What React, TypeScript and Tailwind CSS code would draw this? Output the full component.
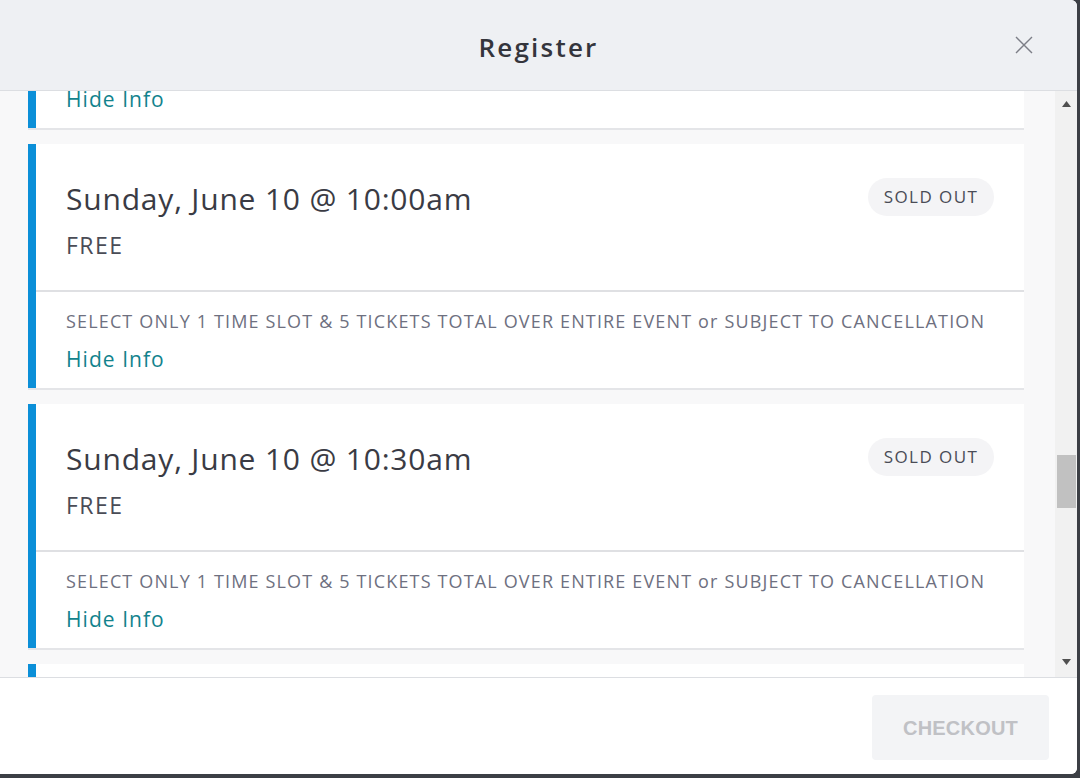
import React from "react";

interface Slot {
  title: string;
  price: string;
}

const slots: Slot[] = [
  { title: "Sunday, June 10 @ 9:30am", price: "FREE" },
  { title: "Sunday, June 10 @ 10:00am", price: "FREE" },
  { title: "Sunday, June 10 @ 10:30am", price: "FREE" },
  { title: "Sunday, June 10 @ 11:00am", price: "FREE" },
];

const NOTE =
  "SELECT ONLY 1 TIME SLOT & 5 TICKETS TOTAL OVER ENTIRE EVENT or SUBJECT TO CANCELLATION";

const SlotCard: React.FC<{ slot: Slot }> = ({ slot }) => (
  <div className="flex bg-white border-b-2 border-[#e4e5e8]">
    <div className="w-2 shrink-0 bg-[#0b8fd8]" />
    <div className="flex-1">
      <div className="h-[148px] flex justify-between pl-[30px] pr-[30px] pt-[35px] border-b-2 border-[#dfe0e3]">
        <div>
          <div className="text-[30px] leading-[40px] tracking-[0.027em] text-[#3a3b44]">{slot.title}</div>
          <div className="mt-[11px] text-[23px] leading-[30px] tracking-[0.065em] text-[#4a4c56]">
            {slot.price}
          </div>
        </div>
        <div className="mt-[-1px] h-[38px] w-[126px] rounded-full bg-[#f4f4f6] flex items-center justify-center text-[17px] tracking-[0.085em] text-[#4a4c56]">
          SOLD OUT
        </div>
      </div>
      <div className="h-[96px] pl-[30px] pt-[17px]">
        <div className="text-[18px] leading-[24px] tracking-[0.064em] text-[#6e7080] whitespace-nowrap">{NOTE}</div>
        <div className="mt-[12px] text-[21px] leading-[28px] tracking-[0.05em] text-[#12838d]">Hide Info</div>
      </div>
    </div>
  </div>
);

export default function App() {
  return (
    <div className="w-[1080px] h-[778px] bg-[#3c3f45] overflow-hidden" style={{ fontFamily: "'Open Sans', 'Liberation Sans', sans-serif" }}>
      <div className="w-[1077px] h-[774px] bg-white rounded-r-[6px] overflow-hidden flex flex-col">
        {/* Header */}
        <div className="h-[91px] shrink-0 pt-[4px] bg-[#eef0f3] border-b border-[#dcdee2] relative flex items-center justify-center">
          <div className="text-[26px] font-semibold tracking-[0.085em] text-[#34353c]">Register</div>
          <button className="absolute right-[44px] top-[36px] text-[#7c7e86]">
            <svg width="18" height="18" viewBox="0 0 18 18" fill="none" stroke="currentColor" strokeWidth="1.4">
              <path d="M1 1L17 17M17 1L1 17" />
            </svg>
          </button>
        </div>

        {/* Body */}
        <div className="h-[586px] shrink-0 flex bg-[#f8f8f9]">
          <div className="flex-1 overflow-hidden pl-[28px] pr-[31px]">
            <div className="mt-[-207px] flex flex-col gap-[14px]">
              {slots.map((s) => (
                <SlotCard key={s.title} slot={s} />
              ))}
            </div>
          </div>
          {/* Scrollbar */}
          <div className="w-[22px] shrink-0 bg-[#f1f1f1] flex flex-col items-center">
            <div className="h-[26px] flex items-center justify-center">
              <svg width="9" height="6" viewBox="0 0 9 6"><path d="M4.5 0L9 6H0z" fill="#505050" /></svg>
            </div>
            <div className="mt-[338px] w-[19px] h-[53px] bg-[#c1c1c1]" />
            <div className="mt-auto h-[30px] flex items-center justify-center">
              <svg width="9" height="6" viewBox="0 0 9 6"><path d="M0 0H9L4.5 6z" fill="#505050" /></svg>
            </div>
          </div>
        </div>

        {/* Footer */}
        <div className="flex-1 border-t border-[#dcdee2] bg-white flex justify-end items-start pt-[17px] pr-[28px]">
          <button className="w-[177px] h-[65px] rounded-[4px] bg-[#f3f4f6] text-[#c0c1c5] text-[20px] font-bold tracking-[0.01em]" style={{ fontFamily: "'Liberation Sans', Arial, sans-serif" }}>
            CHECKOUT
          </button>
        </div>
      </div>
    </div>
  );
}
